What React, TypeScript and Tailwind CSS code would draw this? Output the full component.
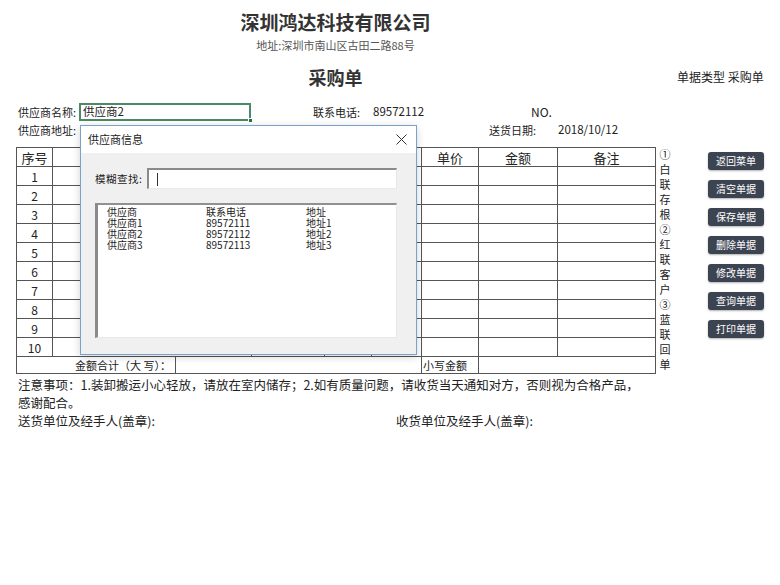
import React from 'react'

const rows = [1, 2, 3, 4, 5, 6, 7, 8, 9, 10]
const colWidths = [36, 123, 76, 73, 47, 50, 57, 79, 98]
const suppliers = [
  ['供应商', '联系电话', '地址'],
  ['供应商1', '89572111', '地址1'],
  ['供应商2', '89572112', '地址2'],
  ['供应商3', '89572113', '地址3'],
]
const buttons = ['返回菜单', '清空单据', '保存单据', '删除单据', '修改单据', '查询单据', '打印单据']
const copies = '①白联存根②红联客户③蓝联回单'.split('')

function SupplierDialog() {
  return (
    <div className="absolute left-[80px] top-[125px] w-[337px] h-[230px] flex flex-col border border-[#7aa3cc] bg-[#f0f0f0] shadow-[0_2px_8px_rgba(0,0,0,0.18)]">
      {/* title bar */}
      <div className="h-[27px] shrink-0 bg-white flex items-center justify-between pl-[7px] pr-[9px]">
        <span className="text-[11px] text-[#222]">供应商信息</span>
        <svg width="11" height="11" viewBox="0 0 11 11">
          <path d="M0.5 0.5 L10.5 10.5 M10.5 0.5 L0.5 10.5" stroke="#333" strokeWidth="1" fill="none" />
        </svg>
      </div>

      {/* body */}
      <div className="flex-1 pt-[15px] pl-[14px] pr-[19px]">
        <div className="flex items-center h-[21px]">
          <span className="w-[52px] shrink-0 whitespace-nowrap text-[10.5px] tracking-[0.5px] text-[#222]">模糊查找:</span>
          <div className="flex-1 h-[21px] bg-white border-t-2 border-l-2 border-t-[#8a8a8a] border-l-[#8a8a8a] border-b border-r border-b-[#e8e8e8] border-r-[#e8e8e8] flex items-center">
            <div className="ml-[8px] w-px h-[13px] bg-[#333]" />
          </div>
        </div>

        <div className="mt-[14px] h-[135px] bg-white border-t-2 border-l-[3px] border-t-[#909090] border-l-[#8a8a8a] border-b border-r border-b-[#e8e8e8] border-r-[#e8e8e8] pl-[9px] pt-[1px]">
          {suppliers.map((s, i) => (
            <div key={i} className="flex h-[11px] leading-[11px] text-[10px] text-[#222]">
              <span className="w-[99px]">{s[0]}</span>
              <span className="w-[100px]">{s[1]}</span>
              <span>{s[2]}</span>
            </div>
          ))}
        </div>
      </div>
    </div>
  )
}

export default function App() {
  return (
    <div className="relative w-[780px] h-[585px] overflow-hidden bg-white text-[#222] font-['Noto_Sans_CJK_SC',sans-serif]">
      <div className="flex">
        {/* main form column */}
        <div className="ml-[16px] w-[639px] flex flex-col">
          <div className="mt-[9px] h-[26px] leading-[26px] text-center text-[19px] font-bold text-[#333]">深圳鸿达科技有限公司</div>
          <div className="mt-[3px] h-[14px] leading-[14px] text-center text-[11px] text-[#555]">地址:深圳市南山区古田二路88号</div>
          <div className="mt-[13px] h-[24px] leading-[24px] text-center text-[18px] font-bold text-[#333]">采购单</div>

          <div className="mt-[14px] h-[18px] flex items-center text-[11px] pl-[2px]">
            <span className="w-[61px]">供应商名称:</span>
            <div className="relative w-[172px] h-[18px] border-2 border-[#4a8a66] flex items-center pl-[2px] text-[11.5px]">
              供应商2
              <div className="absolute -right-[4px] -bottom-[4px] w-[5px] h-[5px] bg-[#217346] border border-white" />
            </div>
            <span className="ml-[62px] w-[60px]">联系电话:</span>
            <span className="w-[158px] text-[11.5px]">89572112</span>
            <span className="text-[12px]">NO.</span>
          </div>

          <div className="mt-[1px] h-[16px] flex items-center text-[11px] pl-[2px]">
            <span className="w-[471px]">供应商地址:</span>
            <span className="w-[69px]">送货日期:</span>
            <span className="text-[11.5px]">2018/10/12</span>
          </div>

          <table className="mt-[9px] w-[639px] table-fixed border-collapse">
            <colgroup>
              {colWidths.map((w, i) => (
                <col key={i} style={{ width: w }} />
              ))}
            </colgroup>
            <tbody>
              <tr className="h-[19px] text-[13px] leading-[17px]">
                <td className="border border-[#555] p-0 text-center">序号</td>
                <td colSpan={2} className="border border-[#555] p-0" />
                <td className="border border-[#555] p-0" />
                <td className="border border-[#555] p-0" />
                <td className="border border-[#555] p-0" />
                <td className="border border-[#555] p-0 text-center">单价</td>
                <td className="border border-[#555] p-0 text-center">金额</td>
                <td className="border border-[#555] p-0 text-center">备注</td>
              </tr>
              {rows.map(n => (
                <tr key={n} className="h-[19px] text-[12px] leading-[17px]">
                  <td className="border border-[#555] p-0 text-center">{n}</td>
                  <td colSpan={2} className="border border-[#555] p-0" />
                  <td className="border border-[#555] p-0" />
                  <td className="border border-[#555] p-0" />
                  <td className="border border-[#555] p-0" />
                  <td className="border border-[#555] p-0" />
                  <td className="border border-[#555] p-0" />
                  <td className="border border-[#555] p-0" />
                </tr>
              ))}
              <tr className="h-[17px] text-[11px] leading-[15px]">
                <td colSpan={2} className="border border-[#555] p-0 text-right pr-[4px] whitespace-nowrap">金额合计（大 写）：</td>
                <td colSpan={4} className="border border-[#555] p-0" />
                <td className="border border-[#555] p-0 pl-[1px]">小写金额</td>
                <td colSpan={2} className="border border-[#555] p-0" />
              </tr>
            </tbody>
          </table>

          <div className="mt-[2px] pl-[2px] text-[12.5px] leading-[18px] text-[#222]">
            <div>注意事项：1.装卸搬运小心轻放，请放在室内储存；2.如有质量问题，请收货当天通知对方，否则视为合格产品，</div>
            <div>感谢配合。</div>
            <div className="flex">
              <span className="w-[378px]">送货单位及经手人(盖章):</span>
              <span>收货单位及经手人(盖章):</span>
            </div>
          </div>
        </div>

        {/* right side column */}
        <div className="flex-1 flex flex-col">
          <div className="mt-[69px] h-[16px] leading-[16px] pl-[22px] text-[12px]">单据类型 采购单</div>
          <div className="mt-[62px] flex">
            <div className="w-[20px] flex flex-col items-center text-[11px] leading-[15px]">
              {copies.map((c, i) => (
                <span key={i}>{c}</span>
              ))}
            </div>
            <div className="ml-[33px] pt-[5px] flex flex-col gap-[10px]">
              {buttons.map(b => (
                <button
                  key={b}
                  className="w-[56px] h-[18px] rounded-[3px] bg-[#3d4451] text-white text-[10px] leading-[18px] shadow-[0_1px_2px_rgba(0,0,0,0.3)]"
                >
                  {b}
                </button>
              ))}
            </div>
          </div>
        </div>
      </div>

      <SupplierDialog />
    </div>
  )
}
